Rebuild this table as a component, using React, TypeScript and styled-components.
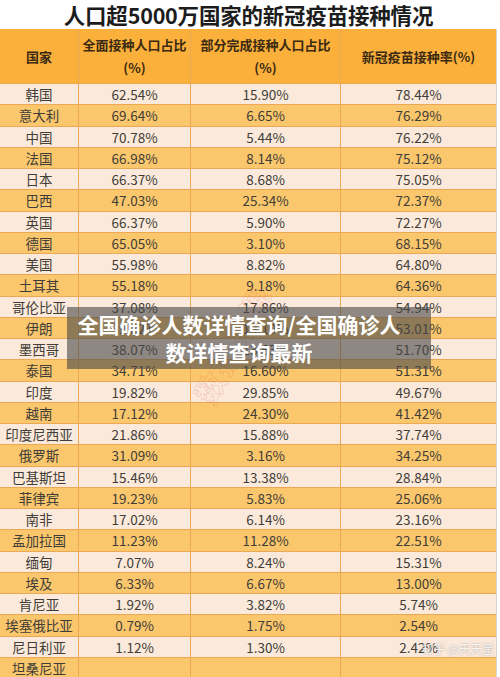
import { createGlobalStyle, styled } from "styled-components"

const Global = createGlobalStyle`
    html, body {
        margin: 0;
        padding: 0;
        height: 677px;
        overflow: hidden;
        background: #fff;
    }
    * {
        box-sizing: border-box;
    }
`

const Page = styled.div`
    position: relative;
    width: 500px;
    height: 677px;
    overflow: hidden;
    font-family: "Noto Sans CJK SC", "Noto Sans", sans-serif;
    background: #fff;
`

const Title = styled.h1`
    margin: 0;
    height: 29px;
    width: 497px;
    font-size: 21.5px;
    line-height: 29px;
    font-weight: 700;
    color: #1c1c1c;
    text-align: center;
    letter-spacing: -0.2px;
`

const Table = styled.div`
    width: 497px;
    border-right: 1px solid #d9d4cc;
`

const Row = styled.div<{ $tone: "head" | "light" | "dark" }>`
    display: grid;
    grid-template-columns: 78px 112px 150px 1fr;
    height: ${p => (p.$tone === "head" ? "55px" : "21.26px")};
    background: ${p =>
        p.$tone === "head" ? "#fbb03b" : p.$tone === "dark" ? "#fbc76c" : "#fbeadc"};
    border-bottom: 1px solid #eba955;
`

const Cell = styled.div<{ $head?: boolean }>`
    display: flex;
    align-items: center;
    justify-content: center;
    text-align: center;
    border-left: 1px solid #eba955;
    font-size: ${p => (p.$head ? "13px" : "13.5px")};
    font-weight: ${p => (p.$head ? 700 : 400)};
    line-height: ${p => (p.$head ? "23px" : "20px")};
    color: ${p => (p.$head ? "#3b2a12" : "#413d38")};
    white-space: pre-line;

    &:first-child {
        border-left: none;
    }
`

const Banner = styled.div`
    position: absolute;
    left: 67px;
    top: 307px;
    width: 364px;
    height: 62px;
    background: rgba(74, 74, 74, 0.62);
    color: #fff;
    font-size: 21px;
    font-weight: 700;
    line-height: 28px;
    text-align: center;
    padding: 3px 28px 3px 8px;
`

const Stamp = styled.div`
    position: absolute;
    left: 168px;
    top: 322px;
    font-size: 30px;
    font-weight: 700;
    color: transparent;
    -webkit-text-stroke: 1px rgba(214, 60, 50, 0.16);
    transform: rotate(-62deg);
    letter-spacing: 2px;
`

const Mark = styled.div`
    position: absolute;
    left: 422px;
    top: 640px;
    font-size: 12px;
    letter-spacing: -0.3px;
    color: rgba(255, 255, 255, 0.85);
    text-shadow: 0 0 2px rgba(0, 0, 0, 0.35);
    white-space: nowrap;
`

const rows: [string, string, string, string][] = [
    ["韩国", "62.54%", "15.90%", "78.44%"],
    ["意大利", "69.64%", "6.65%", "76.29%"],
    ["中国", "70.78%", "5.44%", "76.22%"],
    ["法国", "66.98%", "8.14%", "75.12%"],
    ["日本", "66.37%", "8.68%", "75.05%"],
    ["巴西", "47.03%", "25.34%", "72.37%"],
    ["英国", "66.37%", "5.90%", "72.27%"],
    ["德国", "65.05%", "3.10%", "68.15%"],
    ["美国", "55.98%", "8.82%", "64.80%"],
    ["土耳其", "55.18%", "9.18%", "64.36%"],
    ["哥伦比亚", "37.08%", "17.86%", "54.94%"],
    ["伊朗", "39.82%", "13.19%", "53.01%"],
    ["墨西哥", "38.07%", "13.63%", "51.70%"],
    ["泰国", "34.71%", "16.60%", "51.31%"],
    ["印度", "19.82%", "29.85%", "49.67%"],
    ["越南", "17.12%", "24.30%", "41.42%"],
    ["印度尼西亚", "21.86%", "15.88%", "37.74%"],
    ["俄罗斯", "31.09%", "3.16%", "34.25%"],
    ["巴基斯坦", "15.46%", "13.38%", "28.84%"],
    ["菲律宾", "19.23%", "5.83%", "25.06%"],
    ["南非", "17.02%", "6.14%", "23.16%"],
    ["孟加拉国", "11.23%", "11.28%", "22.51%"],
    ["缅甸", "7.07%", "8.24%", "15.31%"],
    ["埃及", "6.33%", "6.67%", "13.00%"],
    ["肯尼亚", "1.92%", "3.82%", "5.74%"],
    ["埃塞俄比亚", "0.79%", "1.75%", "2.54%"],
    ["尼日利亚", "1.12%", "1.30%", "2.42%"],
    ["坦桑尼亚", "", "", ""],
]

const App = () => {

    return (
        <Page>
            <Global />

            <Title>人口超5000万国家的新冠疫苗接种情况</Title>

            <Table>
                <Row $tone="head">
                    <Cell $head>国家</Cell>
                    <Cell $head>{"全面接种人口占比\n(%)"}</Cell>
                    <Cell $head>{"部分完成接种人口占比\n(%)"}</Cell>
                    <Cell $head>新冠疫苗接种率(%)</Cell>
                </Row>

                {rows.map((r, i) => (
                    <Row key={r[0]} $tone={i % 2 === 0 ? "light" : "dark"}>
                        {r.map((v, j) => (
                            <Cell key={j}>{v}</Cell>
                        ))}
                    </Row>
                ))}
            </Table>

            <Stamp>数据来源</Stamp>

            <Banner>全国确诊人数详情查询/全国确诊人数详情查询最新</Banner>

            <Mark>知乎 @天天奎</Mark>
        </Page>
    )
}

export default App
